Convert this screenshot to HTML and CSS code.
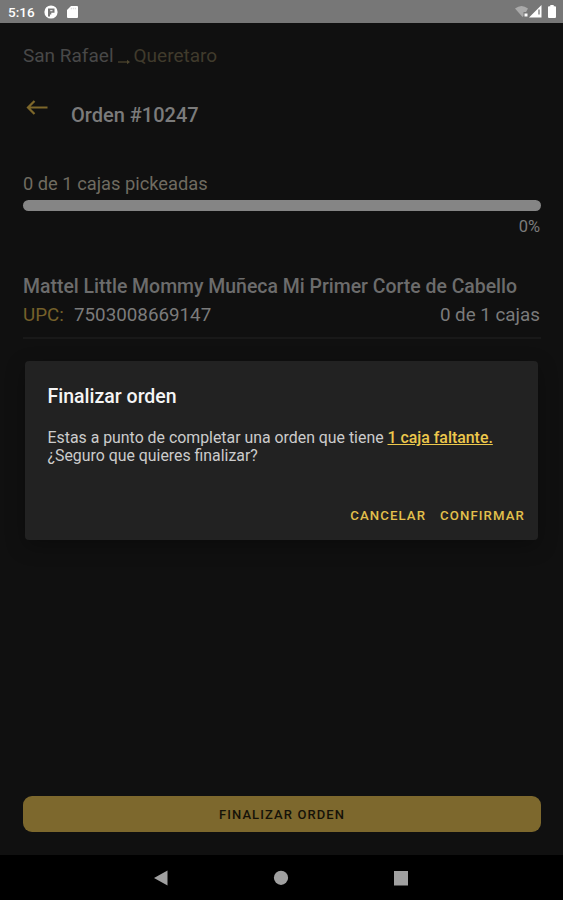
FILE: index.html
```html
<!DOCTYPE html>
<html lang="es">
<head>
    <meta charset="UTF-8">
    <meta name="viewport" content="width=device-width, initial-scale=1.0">
    <title>Orden #10247</title>
    <link rel="stylesheet" href="styles.css">
</head>
<body>
    <header class="status-bar">
        <span class="clock">5:16</span>
        <svg class="status-app" width="14" height="14" viewBox="0 0 14 14">
            <circle cx="7" cy="7" r="6.6" fill="#fff"/>
            <path d="M4 3.500h6.500v4.300H7.300V9.500H6v2H4z" fill="#777"/>
            <path d="M6.200 5.200h2.300v1H6.200z" fill="#fff"/>
        </svg>
        <svg class="status-sd" width="11" height="12" viewBox="0 0 11 12">
            <path d="M4 0h6a1 1 0 0 1 1 1v10a1 1 0 0 1-1 1H1a1 1 0 0 1-1-1V4z" fill="#fff"/>
            <path d="M4.300 1.800v1.500M6.300 1.800v1.500M8.300 1.800v1.500" stroke="#ccc" stroke-width=".8"/>
        </svg>
        <div class="status-right">
            <svg width="14" height="13" viewBox="0 0 14 13">
                <path d="M0 3.500Q6.500-1.500 13 3.500L11 7H8.500V11L7.500 12z" fill="#a9a9a9"/>
                <path d="M9.500 8.500h3v3h-3z" fill="#fff"/>
            </svg>
            <svg width="13" height="13" viewBox="0 0 13 13">
                <path d="M12.500 0v12.500H0z" fill="#fff"/>
                <path d="M10 4.500v5" stroke="#777" stroke-width="1.300"/>
            </svg>
            <svg class="battery" width="8" height="13" viewBox="0 0 8 13">
                <path d="M2.300 0h3.400v1.300H7a1 1 0 0 1 1 1V12a1 1 0 0 1-1 1H1a1 1 0 0 1-1-1V2.300a1 1 0 0 1 1-1h1.300z" fill="#fff"/>
            </svg>
        </div>
    </header>

    <main class="screen">
        <div class="route">
            <span class="origin">San Rafael</span>
            <svg class="route-arrow" width="13" height="6" viewBox="0 0 13 6">
                <path d="M0 3h10" stroke="#4f472f" stroke-width="1.200"/>
                <path d="M9 .8L12 3L9 5.200z" fill="#4f472f"/>
            </svg>
            <span class="destination">Queretaro</span>
        </div>

        <div class="title-row">
            <svg class="back" width="22" height="16" viewBox="0 0 22 16">
                <path d="M21.500 7.500H2M8.500 1L2 7.500L8.500 14" fill="none" stroke="#7d672a" stroke-width="2.200"/>
            </svg>
            <h1>Orden #10247</h1>
        </div>

        <section class="progress">
            <p class="picked">0 de 1 cajas pickeadas</p>
            <div class="track"></div>
            <p class="percent">0%</p>
        </section>

        <section class="item">
            <h2>Mattel Little Mommy Muñeca Mi Primer Corte de Cabello</h2>
            <div class="item-row">
                <span class="upc-label">UPC:</span>
                <span class="upc">7503008669147</span>
                <span class="count">0 de 1 cajas</span>
            </div>
        </section>

        <button class="finish">FINALIZAR ORDEN</button>
    </main>

    <!-- Confirmation dialog -->
    <div class="dialog" role="dialog">
        <h3>Finalizar orden</h3>
        <p>Estas a punto de completar una orden que tiene <a class="missing">1 caja faltante.</a><br>¿Seguro que quieres finalizar?</p>
        <div class="actions">
            <button class="cancel">CANCELAR</button>
            <button class="confirm">CONFIRMAR</button>
        </div>
    </div>

    <nav class="nav-bar">
        <svg width="16" height="16" viewBox="0 0 16 16"><path d="M1 8L14.500.500v15z" fill="#a0a0a0"/></svg>
        <svg width="16" height="16" viewBox="0 0 16 16"><circle cx="8" cy="7.800" r="7.100" fill="#a0a0a0"/></svg>
        <svg width="16" height="16" viewBox="0 0 16 16"><path d="M1 1h14v14.500H1z" fill="#a0a0a0"/></svg>
    </nav>
</body>
</html>
```
FILE: styles.css
```css
* {
    margin: 0;
    padding: 0;
    box-sizing: border-box;
}

body {
    display: flex;
    flex-direction: column;
    height: 900px;
    background: #101010;
    color: #7b7b7b;
    font-family: Roboto, sans-serif;
    overflow: hidden;
}

button {
    border: none;
    background: none;
    font-family: inherit;
}

svg {
    display: block;
    flex: none;
}

.status-bar {
    display: flex;
    align-items: center;
    height: 23px;
    padding: 1px 7px 0 8px;
    background: #777;
    color: #fff;
}

.clock {
    width: 36px;
    font-size: 13.5px;
    font-weight: 500;
}

.status-sd {
    margin-left: 9px;
}

.status-right {
    display: flex;
    margin-left: auto;
    margin-top: -2px;
}

.battery {
    margin-left: 6px;
}

.screen {
    flex: 1;
    display: flex;
    flex-direction: column;
    padding: 21px 22px 23px 23px;
}

.route {
    display: flex;
    height: 24px;
    line-height: 24px;
    font-size: 19px;
    color: #484848;
}

.route-arrow {
    margin: 15px 3px 0 4px;
}

.destination {
    color: #403b2c;
}

.title-row {
    display: flex;
    height: 28px;
    margin-top: 32px;
}

.back {
    margin: 0 23px 0 3px;
}

h1 {
    line-height: 30px;
    font-size: 20px;
    font-weight: 500;
}

.progress {
    margin-top: 44px;
}

.picked {
    line-height: 24px;
    font-size: 18.3px;
    color: #6f6b60;
}

.track {
    height: 11px;
    margin-top: 4px;
    border-radius: 6px;
    background: #858585;
}

.percent {
    margin-top: 5px;
    padding-right: 1px;
    line-height: 22px;
    font-size: 16.5px;
    text-align: right;
}

.item {
    height: 66px;
    margin-top: 35px;
    border-bottom: 2px solid #191919;
}

h2 {
    line-height: 28px;
    font-size: 19.43px;
    font-weight: 500;
    color: #6c6c6c;
    white-space: nowrap;
}

.item-row {
    display: flex;
    padding-right: 1px;
    line-height: 28px;
    font-size: 18.8px;
}

.upc-label {
    width: 51px;
    color: #75602a;
}

.count {
    margin-left: auto;
}

.finish {
    height: 36px;
    margin-top: auto;
    border-radius: 9px;
    background: #7d682d;
    color: #151208;
    font-size: 13px;
    font-weight: 500;
    letter-spacing: 1.1px;
}

.dialog {
    position: absolute;
    top: 361px;
    left: 25px;
    width: 513px;
    height: 179px;
    padding: 22px 13px 12px 22.5px;
    border-radius: 4px;
    background: #222;
    box-shadow: 0 6px 20px rgba(0, 0, 0, 0.3);
    color: #ccc;
}

.dialog h3 {
    line-height: 27px;
    font-size: 19.5px;
    font-weight: 500;
    color: #f5f5f5;
}

.dialog p {
    margin-top: 19px;
    line-height: 18px;
    font-size: 15.86px;
    white-space: nowrap;
}

.missing {
    color: #edc84c;
    font-weight: 500;
    text-decoration: underline;
}

.actions {
    display: flex;
    justify-content: flex-end;
    gap: 14px;
    margin-top: 40px;
}

.actions button {
    height: 20px;
    color: #e3c04c;
    font-size: 13.2px;
    font-weight: 500;
    letter-spacing: 1.1px;
}

.nav-bar {
    display: flex;
    justify-content: center;
    align-items: center;
    gap: 104px;
    height: 45px;
    padding-right: 1px;
    background: #000;
}
```
